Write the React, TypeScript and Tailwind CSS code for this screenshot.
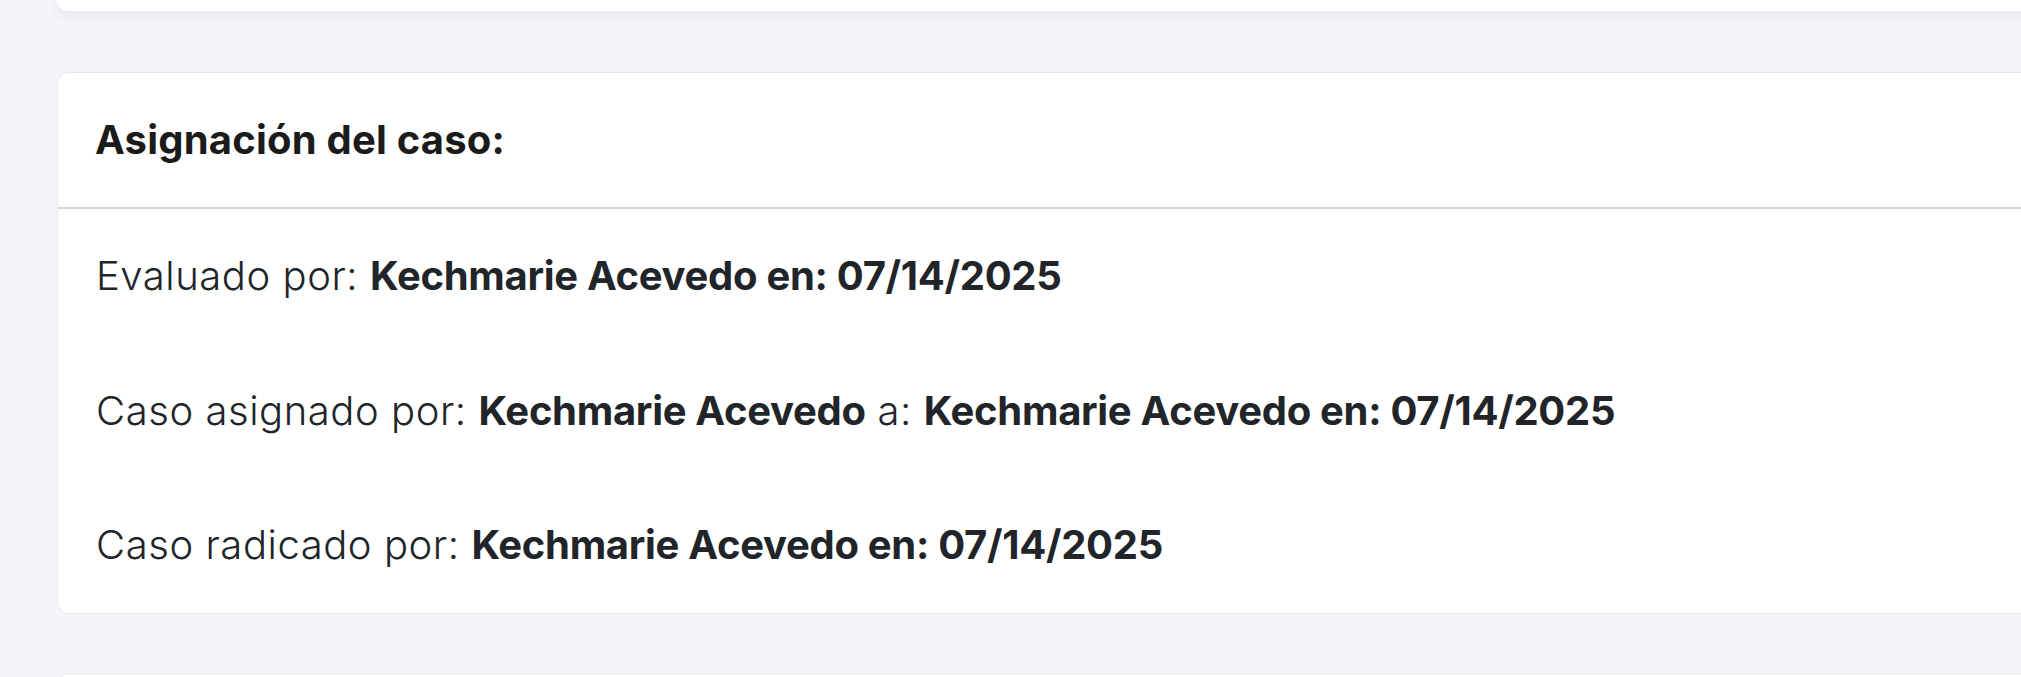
import React from "react";

const rows: { parts: { t: string; b?: boolean }[] }[] = [
  {
    parts: [
      { t: "Evaluado por: " },
      { t: "Kechmarie Acevedo en: 07/14/2025", b: true },
    ],
  },
  {
    parts: [
      { t: "Caso asignado por: " },
      { t: "Kechmarie Acevedo", b: true },
      { t: " a: " },
      { t: "Kechmarie Acevedo en: 07/14/2025", b: true },
    ],
  },
  {
    parts: [
      { t: "Caso radicado por: " },
      { t: "Kechmarie Acevedo en: 07/14/2025", b: true },
    ],
  },
];

export default function App() {
  return (
    <div
      className="w-[2021px] h-[677px] overflow-hidden bg-[#f5f5f9] pl-[57px]"
      style={{ fontFamily: "Inter, 'Noto Sans', sans-serif" }}
    >
      <div className="flex flex-col w-[2000px]">
        <div className="h-[11px] bg-white rounded-b-[12px] shadow-[0_4px_12px_rgba(30,30,60,0.08)]" />
        <div className="mt-[61px] bg-white border border-[#e6e9ef] rounded-[12px] overflow-hidden">
          <div className="h-[134px] flex items-center pl-[37px]">
            <h2 className="text-[40px] leading-[56px] font-bold text-[#1b1b1b] tracking-[0.2px]">
              Asignación del caso:
            </h2>
          </div>
          <div className="h-[2px] bg-[#d6d6d6]" />
          <div className="flex flex-col">
            {rows.map((r, i) => (
              <div key={i} className="h-[134.5px] flex items-center pl-[38px]">
                <p className="text-[40px] leading-[56px] text-[#212529] font-light tracking-[0.55px] whitespace-nowrap">
                  {r.parts.map((p, j) =>
                    p.b ? (
                      <strong key={j} className="font-bold tracking-[-0.3px]">
                        {p.t}
                      </strong>
                    ) : (
                      <span key={j}>{p.t}</span>
                    )
                  )}
                </p>
              </div>
            ))}
          </div>
        </div>
        <div className="mt-[59px] h-[40px] bg-white border border-[#e6e9ef] rounded-t-[12px]" />
      </div>
    </div>
  );
}
